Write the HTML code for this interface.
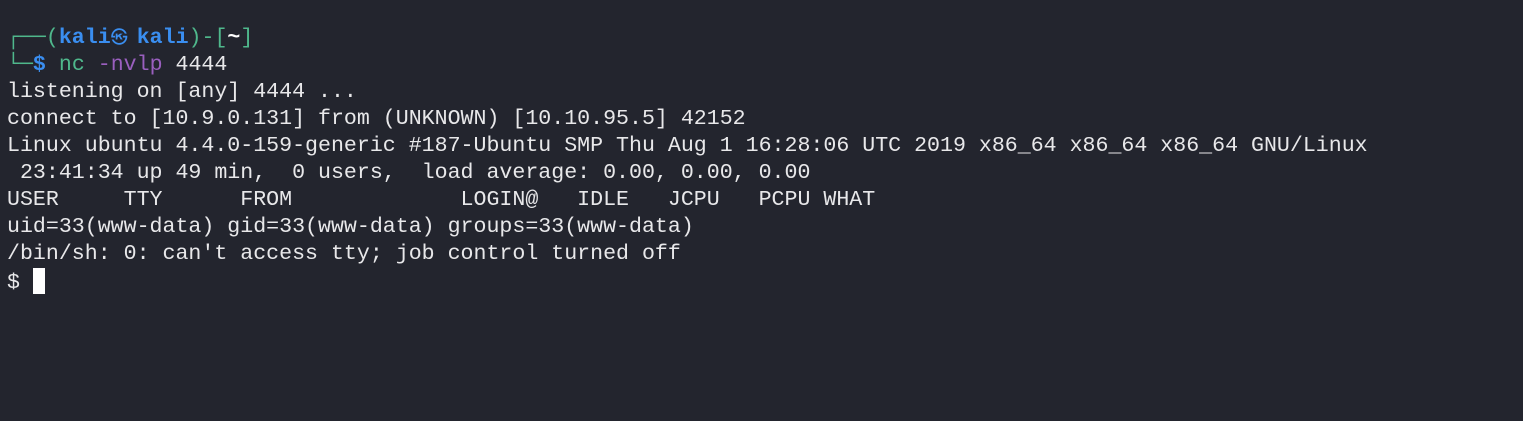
<!DOCTYPE html>
<html><head><style>
html,body{margin:0;padding:0;background:#23252e;width:1523px;height:421px;overflow:hidden}
pre{margin:0;position:absolute;left:7px;top:25px;font-family:"Liberation Mono","DejaVu Sans Mono",monospace;font-size:21.6px;line-height:27px;color:#e8e8ea;letter-spacing:0}
.g{color:#4fb88c}.b{color:#3a8ef0;font-weight:bold}.p{color:#9a5fbf}.w{color:#fff;font-weight:bold}
.sym{display:inline-block;width:26px;text-align:left;font-size:17px;font-family:"DejaVu Sans",sans-serif;vertical-align:top;font-weight:normal}
.cur{display:inline-block;width:12px;height:26px;background:#fff;vertical-align:-6px}
</style></head><body>
<pre><span class="g">┌──(</span><span class="b">kali<span class="sym">㉿</span>kali</span><span class="g">)-[</span><span class="w">~</span><span class="g">]</span>
<span class="g">└─</span><span class="b">$</span> <span class="g">nc</span> <span class="p">-nvlp</span> 4444
listening on [any] 4444 ...
connect to [10.9.0.131] from (UNKNOWN) [10.10.95.5] 42152
Linux ubuntu 4.4.0-159-generic #187-Ubuntu SMP Thu Aug 1 16:28:06 UTC 2019 x86_64 x86_64 x86_64 GNU/Linux
 23:41:34 up 49 min,  0 users,  load average: 0.00, 0.00, 0.00
USER     TTY      FROM             LOGIN@   IDLE   JCPU   PCPU WHAT
uid=33(www-data) gid=33(www-data) groups=33(www-data)
/bin/sh: 0: can't access tty; job control turned off
$ <span class="cur"></span></pre>
</body></html>
